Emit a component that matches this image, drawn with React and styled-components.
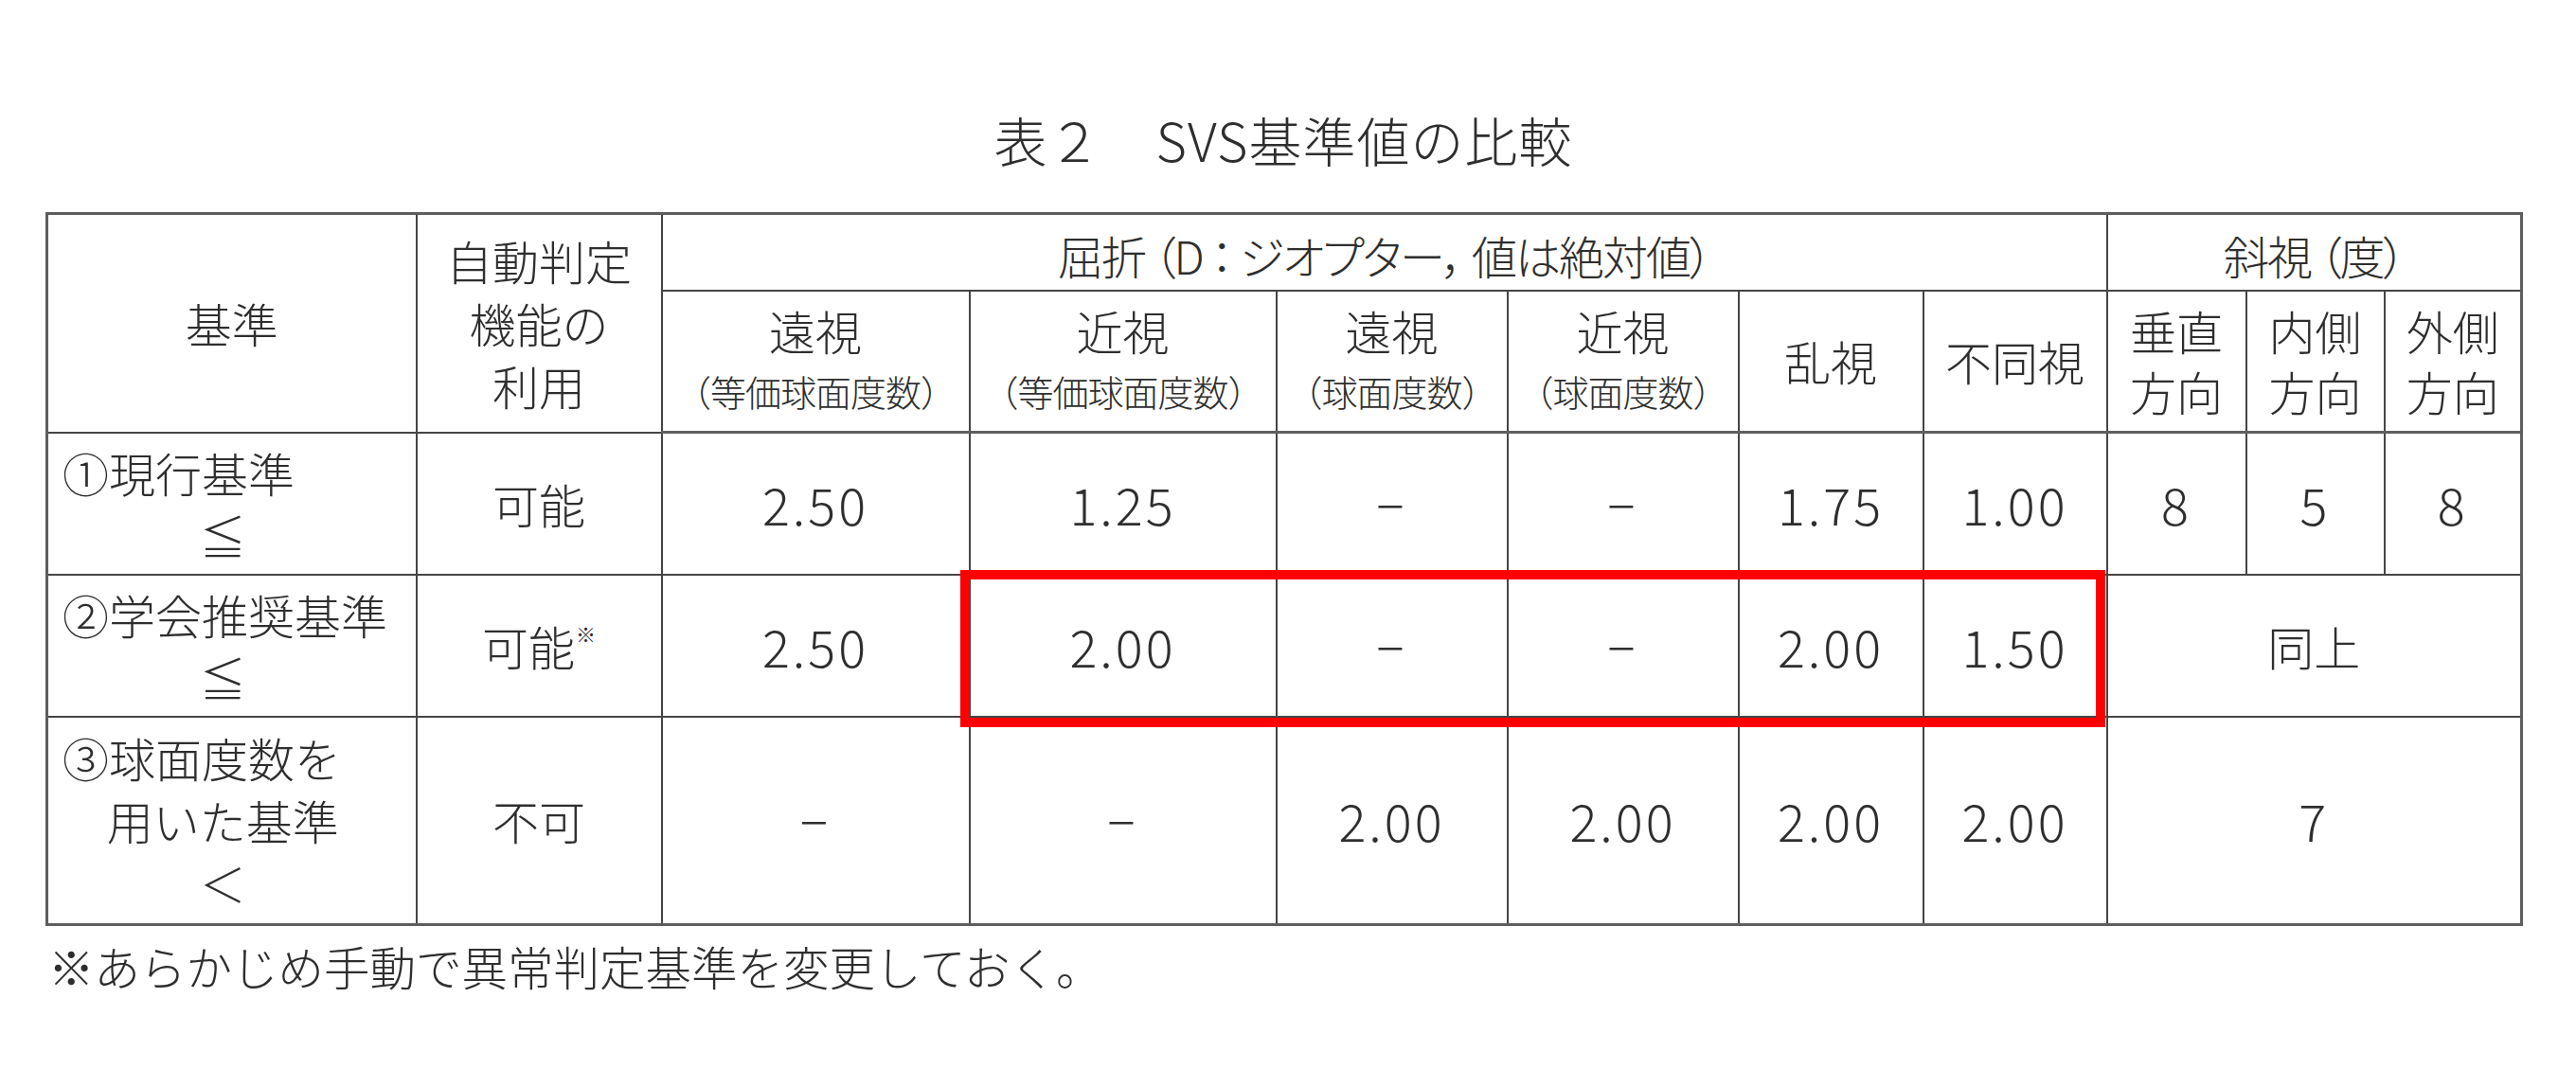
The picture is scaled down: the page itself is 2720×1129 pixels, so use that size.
import React from 'react';
import styled, { createGlobalStyle } from 'styled-components';

const GlobalStyle = createGlobalStyle`
  html, body {
    margin: 0;
    padding: 0;
    background: #ffffff;
  }
  body {
    font-family: "Noto Sans CJK JP", "Noto Sans", sans-serif;
    font-weight: 300;
    color: #2e2e2e;
  }
`;

const colWidths = [390, 259, 325, 324, 244, 244, 195, 194, 147, 146, 145];

const DASH = '−';

const rows = [
   {
      label: '①現行基準',
      sub: ['≦'],
      auto: '可能',
      note: false,
      values: ['2.50', '1.25', DASH, DASH, '1.75', '1.00'],
      squint: ['8', '5', '8'],
      height: 150,
   },
   {
      label: '②学会推奨基準',
      sub: ['≦'],
      auto: '可能',
      note: true,
      values: ['2.50', '2.00', DASH, DASH, '2.00', '1.50'],
      squint: ['同上'],
      height: 150,
   },
   {
      label: '③球面度数を',
      sub: ['用いた基準', '＜'],
      auto: '不可',
      note: false,
      values: [DASH, DASH, '2.00', '2.00', '2.00', '2.00'],
      squint: ['7'],
      height: 220,
   },
];

const Page = styled.div`
   width: 2720px;
   padding: 113px 0 0 48px;
   box-sizing: border-box;
`;

const Title = styled.h1`
   width: 2614px;
   margin: 0 0 44px;
   font-size: 56px;
   line-height: 67px;
   font-weight: 300;
   text-align: center;
   letter-spacing: 1px;
`;

const TableWrap = styled.div`
   position: relative;
   width: 2614px;
`;

const Table = styled.table`
   border-collapse: collapse;
   table-layout: fixed;
   width: 2614px;
   border: 3px solid #5e5e5e;
`;

const Row = styled.tr`
   height: ${(p) => p.$h}px;
`;

const HeadRow = styled.tr`
   height: ${(p) => p.$h}px;
   &:last-child > th {
      border-bottom: 3px solid #5e5e5e;
   }
`;

const HeadCell = styled.th`
   border: 2px solid #454545;
   padding: ${(p) => (p.$group ? '6px 0 0' : '0')};
   font-size: ${(p) => (p.$group ? 48 : 49)}px;
   font-weight: 300;
   line-height: 66px;
   text-align: center;
   vertical-align: middle;
   white-space: nowrap;
   font-feature-settings: ${(p) => (p.$group ? '"palt" 1' : 'normal')};
   letter-spacing: ${(p) => (p.$group ? -2 : 0)}px;
`;

const Cell = styled.td`
   border: 2px solid #454545;
   padding: 0;
   font-size: ${(p) => (p.$num ? 54 : 49)}px;
   letter-spacing: ${(p) => (p.$num ? 3 : 0)}px;
   line-height: 66px;
   text-align: center;
   vertical-align: middle;
`;

const LabelCell = styled(Cell)`
   padding: 0 34px 0 15px;
`;

const Lead = styled.div`
   text-align: left;
   white-space: nowrap;
`;

const SubLine = styled.div`
   text-align: center;
   white-space: nowrap;
`;

const HeadMain = styled.div`
   line-height: 64px;
`;

const HeadSub = styled.div`
   font-size: 38px;
   line-height: 64px;
   white-space: nowrap;
   letter-spacing: -1px;
`;

const Note = styled.sup`
   font-size: 21px;
   line-height: 0;
   vertical-align: 25px;
   margin-left: 1px;
`;

const Highlight = styled.div`
   position: absolute;
   left: 966px;
   top: 378px;
   width: 1209px;
   height: 166px;
   border: 10px solid #ff0000;
   box-sizing: border-box;
   pointer-events: none;
`;

const Footnote = styled.p`
   margin: 13px 0 0 3px;
   font-size: 48.5px;
   line-height: 58px;
`;

const refraction = [
   ['遠視', '（等価球面度数）'],
   ['近視', '（等価球面度数）'],
   ['遠視', '（球面度数）'],
   ['近視', '（球面度数）'],
   ['乱視'],
   ['不同視'],
];

const squintHeads = [
   ['垂直', '方向'],
   ['内側', '方向'],
   ['外側', '方向'],
];

const App = () => {
   return (
      <Page>
         <GlobalStyle />
         <Title>表２　SVS基準値の比較</Title>
         <TableWrap>
            <Table>
               <colgroup>
                  {colWidths.map((w, i) => (
                     <col key={i} style={{ width: w }} />
                  ))}
               </colgroup>
               <thead>
                  <HeadRow $h={81}>
                     <HeadCell rowSpan={2}>基準</HeadCell>
                     <HeadCell rowSpan={2}>
                        <div>自動判定</div>
                        <div>機能の</div>
                        <div>利用</div>
                     </HeadCell>
                     <HeadCell colSpan={6} $group>
                        屈折 （D ： ジオプター， 値は絶対値）
                     </HeadCell>
                     <HeadCell colSpan={3} $group>
                        斜視 （度）
                     </HeadCell>
                  </HeadRow>
                  <HeadRow $h={150}>
                     {refraction.map(([main, sub], i) => (
                        <HeadCell key={i}>
                           <HeadMain>{main}</HeadMain>
                           {sub && <HeadSub>{sub}</HeadSub>}
                        </HeadCell>
                     ))}
                     {squintHeads.map(([a, b], i) => (
                        <HeadCell key={i}>
                           <HeadMain>{a}</HeadMain>
                           <HeadMain>{b}</HeadMain>
                        </HeadCell>
                     ))}
                  </HeadRow>
               </thead>
               <tbody>
                  {rows.map((row, i) => (
                     <Row key={i} $h={row.height}>
                        <LabelCell>
                           <Lead>{row.label}</Lead>
                           {row.sub.map((s, j) => (
                              <SubLine key={j}>{s}</SubLine>
                           ))}
                        </LabelCell>
                        <Cell>
                           {row.auto}
                           {row.note && <Note>※</Note>}
                        </Cell>
                        {row.values.map((v, j) => (
                           <Cell key={j} $num>
                              {v}
                           </Cell>
                        ))}
                        {row.squint.length === 3 ? (
                           row.squint.map((v, j) => (
                              <Cell key={j} $num>
                                 {v}
                              </Cell>
                           ))
                        ) : (
                           <Cell colSpan={3} $num={row.squint[0] === '7'}>
                              {row.squint[0]}
                           </Cell>
                        )}
                     </Row>
                  ))}
               </tbody>
            </Table>
            <Highlight />
         </TableWrap>
         <Footnote>※あらかじめ手動で異常判定基準を変更しておく。</Footnote>
      </Page>
   );
};

export default App;
